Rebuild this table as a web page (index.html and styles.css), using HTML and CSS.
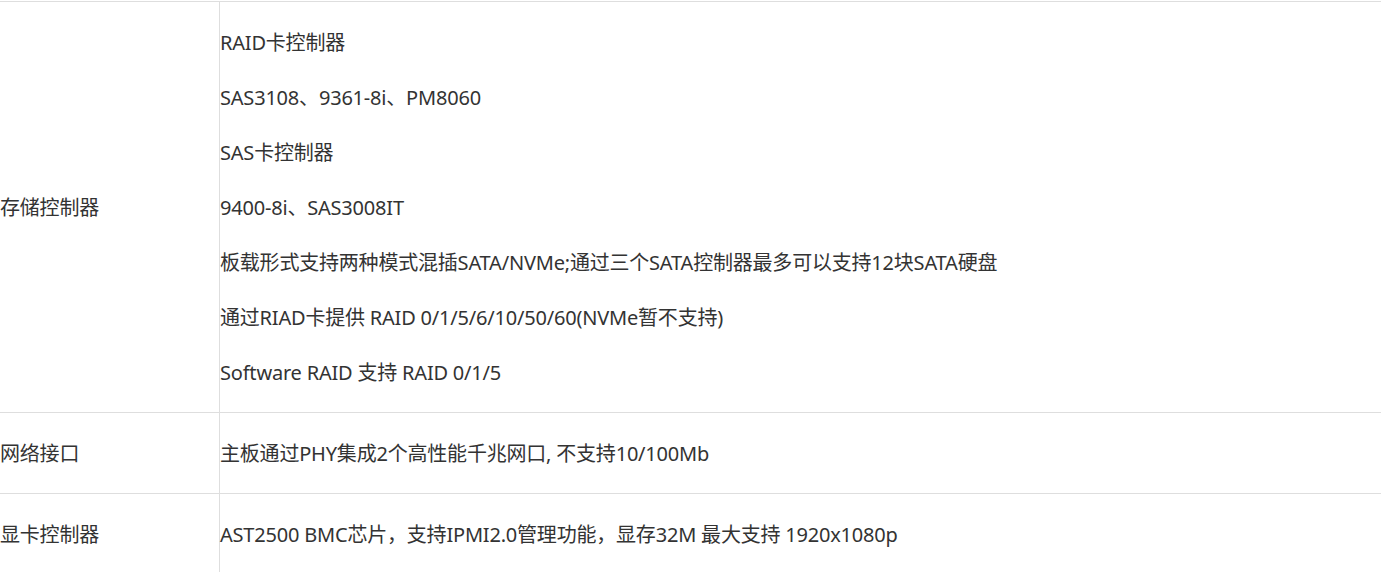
FILE: index.html
```html
<!DOCTYPE html>
<html lang="zh-CN">
<head>
<meta charset="utf-8">
<title>规格</title>
<link rel="stylesheet" href="styles.css">
</head>
<body>
<table class="spec">
  <tbody>
    <tr>
      <td class="label">存储控制器</td>
      <td class="value">
        <p>RAID卡控制器</p>
        <p>SAS3108、9361-8i、PM8060</p>
        <p>SAS卡控制器</p>
        <p>9400-8i、SAS3008IT</p>
        <p>板载形式支持两种模式混插SATA/NVMe;通过三个SATA控制器最多可以支持12块SATA硬盘</p>
        <p>通过RIAD卡提供 RAID 0/1/5/6/10/50/60(NVMe暂不支持)</p>
        <p>Software RAID 支持 RAID 0/1/5</p>
      </td>
    </tr>
    <tr>
      <td class="label">网络接口</td>
      <td class="value"><p>主板通过PHY集成2个高性能千兆网口, 不支持10/100Mb</p></td>
    </tr>
    <tr>
      <td class="label">显卡控制器</td>
      <td class="value"><p>AST2500 BMC芯片，支持IPMI2.0管理功能，显存32M 最大支持 1920x1080p</p></td>
    </tr>
  </tbody>
</table>
</body>
</html>
```

FILE: styles.css
```css
html, body {
  margin: 0;
  padding: 0;
  background: #fff;
  overflow: hidden;
}

body {
  font-family: "Noto Sans", "Noto Sans CJK SC", sans-serif;
  font-size: 20px;
  letter-spacing: -0.2px;
  color: #333;
  padding-top: 1px;
}

.spec {
  border-collapse: collapse;
  width: calc(100% + 2px);
  margin-left: -1px;
}

.spec td {
  border: 1px solid #dedede;
  padding: 1px 0 0;
  vertical-align: middle;
  line-height: 30px;
}

.spec .label {
  width: 219px;
  padding-top: 2px;
}

.spec p {
  margin: 25px 0;
}

.spec p:last-child {
  margin-bottom: 24px;
}
```
